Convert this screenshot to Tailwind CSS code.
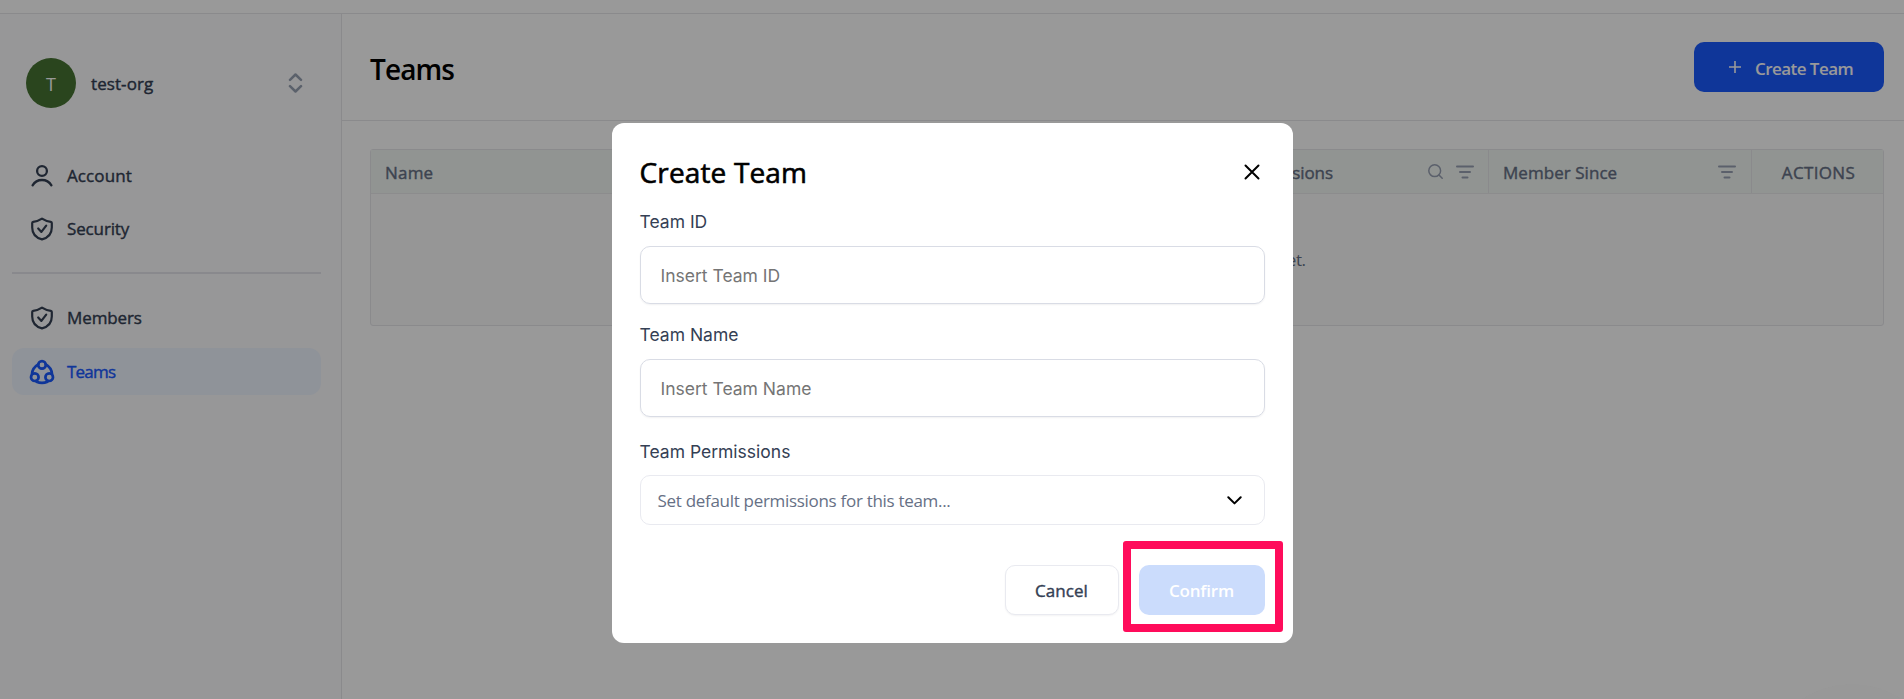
<!DOCTYPE html>
<html lang="en">
<head>
<meta charset="utf-8">
<title>Teams</title>
<script src="https://cdn.jsdelivr.net/npm/@tailwindcss/browser@4"></script>
</head>
<body class="h-screen overflow-hidden bg-white font-['Open_Sans',sans-serif] text-[17px] text-[#344054]">
<div class="flex h-full flex-col">
  <div class="h-[14px] shrink-0 border-b border-[#e6e7ea]"></div>
  <div class="flex min-h-0 flex-1">
    <aside class="flex w-[342px] shrink-0 flex-col border-r border-[#e6e7ea] bg-[#fcfcfd] pl-3 pr-5 pt-11 font-medium">
      <div class="mb-11 flex h-[50px] items-center pl-[14px] pr-[18px]">
        <div class="flex size-[50px] items-center justify-center rounded-full bg-[#467332] pt-0.5 text-[18px] font-normal text-white">T</div>
        <span class="ml-[15px] pt-0.5 tracking-[0.08px] [-webkit-text-stroke:0.4px]">test-org</span>
        <svg class="ml-auto" width="15" height="20" viewBox="0 0 15 20" fill="none" stroke="#98a2b3" stroke-width="2.5" stroke-linecap="round" stroke-linejoin="round"><path d="M2 6.800 7.500 1.500 13 6.800M2 13.200l5.500 5.300L13 13.200"/></svg>
      </div>
      <nav class="flex flex-col">
        <a class="flex h-[47px] items-center gap-[13px] rounded-xl pl-[18px]">
          <svg width="24" height="24" viewBox="0 0 24 24" fill="none" stroke="#344054" stroke-width="2.3" stroke-linecap="round"><circle cx="12" cy="7" r="4.900"/><path d="M2.600 21.300C4.600 17.900 8 16 12 16s7.400 1.900 9.400 5.300"/></svg>
          <span class="tracking-[0.1px] [-webkit-text-stroke:0.4px]">Account</span>
        </a>
        <a class="mt-1.5 flex h-[47px] items-center gap-[13px] rounded-xl pl-[18px]">
          <svg width="24" height="24" viewBox="0 0 24 24" fill="none" stroke="#344054" stroke-width="2.2" stroke-linecap="round" stroke-linejoin="round"><path d="M12 1.600C9.400 3.300 6 4.500 3.200 4.800c-.7.100-1 .5-1 1.200V10.500c0 6 3.800 10.300 9.800 11.900 6-1.600 9.800-5.900 9.800-11.900V6c0-.7-.3-1.100-1-1.200C18 4.500 14.600 3.300 12 1.600ZM8.200 11.500l3.200 3.400 4.800-6.300"/></svg>
          <span class="-tracking-[0.14px] [-webkit-text-stroke:0.4px]">Security</span>
        </a>
        <div class="my-5 h-0.5 bg-[#e4e5ec]"></div>
        <a class="flex h-[47px] items-center gap-[13px] rounded-xl pl-[18px] pt-px">
          <svg class="-mt-px" width="24" height="24" viewBox="0 0 24 24" fill="none" stroke="#344054" stroke-width="2.2" stroke-linecap="round" stroke-linejoin="round"><path d="M12 1.600C9.400 3.300 6 4.500 3.200 4.800c-.7.100-1 .5-1 1.200V10.500c0 6 3.800 10.300 9.800 11.900 6-1.600 9.800-5.900 9.800-11.900V6c0-.7-.3-1.100-1-1.200C18 4.500 14.600 3.300 12 1.600ZM8.200 11.500l3.200 3.400 4.800-6.300"/></svg>
          <span class="-tracking-[0.1px] [-webkit-text-stroke:0.4px]">Members</span>
        </a>
        <a class="mt-[7px] flex h-[47px] items-center gap-[13px] rounded-xl bg-[#eff5ff] pl-[18px] text-[#1a5aff]">
          <svg width="24" height="24" viewBox="0 0 24 24" fill="none" stroke="#1a5aff" stroke-width="2.7" stroke-linecap="round" class="overflow-visible"><circle cx="12" cy="4.900" r="3.800"/><circle cx="4.800" cy="17.200" r="3.800"/><circle cx="19.200" cy="17.200" r="3.800"/><path d="M8.200 4.400C4.500 6.600 2.200 9.800 2 14M15.800 4.400c3.700 2.200 6 5.400 6.200 9.600M6.500 21.800c3.500 1.500 7.500 1.500 11 0"/></svg>
          <span class="-tracking-[0.77px] [-webkit-text-stroke:0.4px]">Teams</span>
        </a>
      </nav>
    </aside>

    <main class="flex min-w-0 flex-1 flex-col">
      <header class="flex h-[107px] items-center justify-between border-b border-[#e6e7ea] pl-7 pr-5">
        <h1 class="pt-[3px] text-[28px] font-semibold -tracking-[0.9px] text-black">Teams</h1>
        <button class="flex h-[50px] w-[190px] items-center rounded-[10px] bg-[#1a5aff] pl-[35px] font-semibold text-white">
          <svg width="12" height="12" viewBox="0 0 12 12" stroke="#fff" stroke-width="1.600"><path d="M6 0v12M0 6h12"/></svg>
          <span class="ml-[14px] whitespace-nowrap pt-[3px] -tracking-[0.55px]">Create Team</span>
        </button>
      </header>
      <section class="ml-7 mr-5 mt-7 flex h-[177px] flex-col rounded-[3px] border border-[#e6e7ea] bg-[#fafafa]">
        <div class="flex h-11 shrink-0 items-stretch border-b border-[#e9eaec] bg-[#f2f7f4] font-medium text-[#667085]">
          <div class="flex flex-1 items-center pl-[14px] pt-0.5 tracking-[0.2px] [-webkit-text-stroke:0.4px]">Name</div>
          <div class="flex w-[265px] items-center border-r border-[#e6e7ea] pl-[14px] pr-[14px]">
            <span class="pt-0.5 -tracking-[0.1px] [-webkit-text-stroke:0.4px]">Permissions</span>
            <svg class="ml-auto mr-[13px]" width="15" height="15" viewBox="0 0 15 15" fill="none" stroke="#98a0b3" stroke-width="1.500" stroke-linecap="round"><circle cx="6.700" cy="6.700" r="5.900"/><path d="m11 11 3.200 3.300"/></svg>
            <svg width="18" height="14" viewBox="0 0 18 14" stroke="#98a0b3" stroke-width="2" stroke-linecap="round"><path d="M1 1.500h16M4 7h10M6.500 12.500h5"/></svg>
          </div>
          <div class="flex w-[263px] items-center border-r border-[#e6e7ea] pl-[14px] pr-[15px]">
            <span class="pt-0.5 tracking-[0.05px] [-webkit-text-stroke:0.4px]">Member Since</span>
            <svg class="ml-auto" width="18" height="14" viewBox="0 0 18 14" stroke="#98a0b3" stroke-width="2" stroke-linecap="round"><path d="M1 1.500h16M4 7h10M6.500 12.500h5"/></svg>
          </div>
          <div class="flex w-[131px] items-center justify-center pl-[2px] pt-0.5 tracking-[0.35px] [-webkit-text-stroke:0.4px]">ACTIONS</div>
        </div>
        <div class="flex flex-1 items-center justify-center text-[#667085]"><span class="whitespace-nowrap -tracking-[0.4px]">Your organization does not have any teams yet.</span></div>
      </section>
    </main>
  </div>
</div>

<!-- Help launcher halo -->
<div class="fixed left-[1761px] top-[684px] size-[182px] rounded-full bg-[#fdfdfd]"></div>

<div class="fixed inset-0 bg-black/40"></div>

<div class="fixed left-[611.5px] top-[123px] flex h-[520px] w-[681px] flex-col rounded-xl bg-white p-7">
  <div class="flex h-[42px] items-center justify-between">
    <h2 class="text-[28px] font-medium leading-[42px] tracking-[0.15px] text-black [-webkit-text-stroke:0.6px]">Create Team</h2>
    <svg class="mr-[5px]" width="16" height="16" viewBox="0 0 16 16" stroke="#000" stroke-width="2" stroke-linecap="round"><path d="m1.500 1.500 13 13M14.500 1.500l-13 13"/></svg>
  </div>
  <label class="mt-[15px] h-7 font-['Inter',sans-serif] text-[17.5px] leading-7">Team ID</label>
  <input class="mt-2.5 h-[58px] w-full rounded-[10px] border-[1.5px] border-[#d9dce5] px-5 font-['Inter',sans-serif] text-[17.5px] shadow-[0_1px_2px_rgba(16,24,40,0.06)] placeholder:text-[#757575]" placeholder="Insert Team ID">
  <label class="mt-[17px] h-7 font-['Inter',sans-serif] text-[17.5px] leading-7">Team Name</label>
  <input class="mt-2.5 h-[58px] w-full rounded-[10px] border-[1.5px] border-[#d9dce5] px-5 font-['Inter',sans-serif] text-[17.5px] shadow-[0_1px_2px_rgba(16,24,40,0.06)] placeholder:text-[#757575]" placeholder="Insert Team Name">
  <label class="mt-[21px] h-7 font-['Inter',sans-serif] text-[17.5px] leading-7">Team Permissions</label>
  <div class="mt-[9px] flex h-[50px] items-center justify-between rounded-[10px] border border-[#e9eaf0] pl-[17px] pr-[22px] text-[#667085]">
    <span class="pt-px -tracking-[0.3px]">Set default permissions for this team...</span>
    <svg width="15" height="9" viewBox="0 0 15 9" fill="none" stroke="#000" stroke-width="2" stroke-linecap="round" stroke-linejoin="round"><path d="m1.300 1.200 6.200 6.200 6.200-6.200"/></svg>
  </div>
  <div class="mt-10 flex h-[50px] justify-end gap-5">
    <button class="w-[114px] rounded-[10px] border border-[#e9eaf0] bg-white pt-0.5 font-medium tracking-[0.05px] shadow-[0_1px_2px_rgba(16,24,40,0.05)] [-webkit-text-stroke:0.4px]">Cancel</button>
    <button class="w-[126px] rounded-[10px] bg-[#cbdcfc] pt-0.5 font-semibold -tracking-[0.2px] text-white">Confirm</button>
  </div>
  <div class="absolute left-[511.5px] top-[418px] h-[91px] w-[160px] rounded-[3px] border-8 border-[#ff0c5b]"></div>
</div>
</body>
</html>
